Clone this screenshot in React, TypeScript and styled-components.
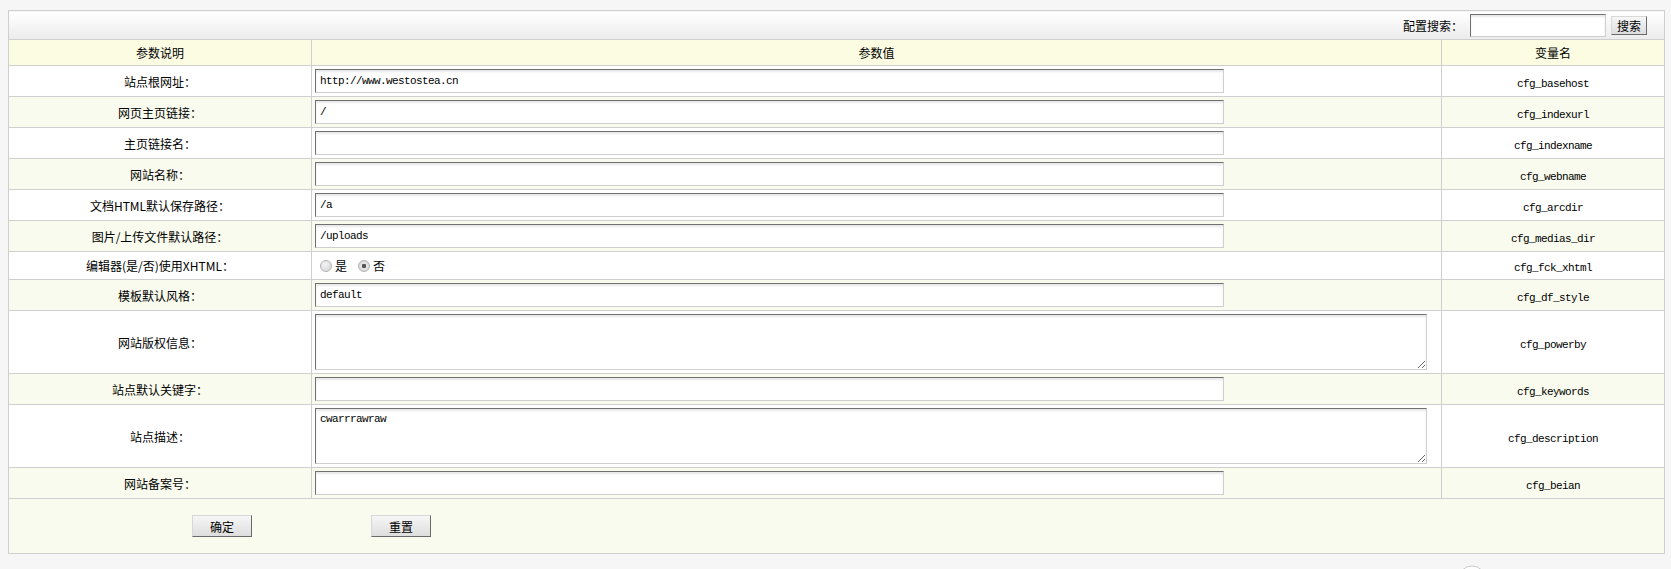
import styled, { createGlobalStyle } from "styled-components";

const GlobalStyle = createGlobalStyle`
  body {
    margin: 10px 6px 8px 8px;
    background: #f6f6f6;
    font-family: "Noto Sans CJK SC", sans-serif;
    font-size: 12px;
    color: #000;
  }
`;

const ConfigTable = styled.table`
  width: 100%;
  border-collapse: collapse;
  table-layout: fixed;
  border: 1px solid #cfcfcf;
  background: #fff;
`;

const Cell = styled.td<{ $align?: string }>`
  border: 1px solid #cfcfcf;
  padding: 0 3px;
  text-align: ${(p) => p.$align || "center"};
  vertical-align: middle;
`;

const SearchCell = styled.td`
  height: 28px;
  padding: 0;
  border: 1px solid #cfcfcf;
  background: linear-gradient(#ffffff, #ececec);
`;

const SearchBar = styled.div`
  display: flex;
  justify-content: flex-end;
  align-items: center;
  padding-right: 17px;
  height: 28px;
`;

const SearchLabel = styled.span`
  margin-right: 7px;
`;

const HeadRow = styled.tr`
  background: #fbfce2;

  & > td {
    height: 25px;
  }
`;

const DataRow = styled.tr<{ $striped: boolean; $tall?: boolean; $short?: boolean }>`
  background: ${(p) => (p.$striped ? "#f9fbee" : "#ffffff")};

  & > td {
    height: ${(p) => (p.$tall ? "62px" : p.$short ? "27px" : "30px")};
  }
`;

const VarName = styled.span`
  font-family: "Liberation Mono", monospace;
  font-size: 11px;
  letter-spacing: -0.6px;
`;

const TextInput = styled.input`
  box-sizing: border-box;
  width: 909px;
  height: 24px;
  margin: 0;
  padding: 0 4px;
  border: 1px solid #cfcfcf;
  border-top-color: #707070;
  border-left-color: #707070;
  box-shadow: inset 0 2px 2px #e8e8e8;
  font-family: "Liberation Mono", monospace;
  font-size: 11px;
  letter-spacing: -0.6px;
  color: #000;
  display: block;
  outline: none;
`;

const SearchInput = styled(TextInput)`
  width: 136px;
  height: 23px;
  margin-right: 5px;
`;

const TextBox = styled.textarea`
  box-sizing: border-box;
  width: 1112px;
  height: 56px;
  margin: 0;
  padding: 4px;
  border: 1px solid #cfcfcf;
  border-top-color: #707070;
  border-left-color: #707070;
  box-shadow: inset 0 2px 2px #e8e8e8;
  font-family: "Liberation Mono", monospace;
  font-size: 11px;
  letter-spacing: -0.6px;
  display: block;
  outline: none;
`;

const RadioGroup = styled.div`
  display: flex;
  align-items: center;
  gap: 6px;

  & label {
    display: flex;
    align-items: center;
  }
`;

const Radio = styled.input`
  appearance: none;
  box-sizing: border-box;
  width: 12px;
  height: 12px;
  margin: 0 3px 0 5px;
  border: 1px solid #b4b4b4;
  border-radius: 50%;
  background: radial-gradient(circle at 40% 35%, #f4f4f4, #d2d2d2);

  &:checked {
    background: radial-gradient(circle, #555 0 2px, #e6e6e6 2.5px, #cfcfcf);
  }
`;

const CoolButton = styled.button<{ $w: number; $h: number }>`
  width: ${(p) => p.$w}px;
  height: ${(p) => p.$h}px;
  padding: 0;
  border: 1px solid #d8d8d8;
  border-right-color: #6a6a6a;
  border-bottom-color: #6a6a6a;
  background: linear-gradient(#f6f6f6, #dedede);
  font-family: "Noto Sans CJK SC", sans-serif;
  font-size: 12px;
  color: #000;
  cursor: pointer;
`;

const FooterRow = styled.tr`
  background: #f9fbee;

  & > td {
    height: 54px;
  }
`;

const ButtonBar = styled.div`
  display: flex;
  align-items: center;
  gap: 119px;
  padding-left: 180px;
`;

const BelowBar = styled.div`
  display: flex;
  justify-content: flex-end;
  padding-right: 178px;
  margin-top: 11px;
`;

type Row = {
  label: string;
  name: string;
  value?: string;
  type?: "text" | "radio" | "textarea";
};

const rows: Row[] = [
  { label: "站点根网址：", value: "http://www.westostea.cn", name: "cfg_basehost" },
  { label: "网页主页链接：", value: "/", name: "cfg_indexurl" },
  { label: "主页链接名：", value: "", name: "cfg_indexname" },
  { label: "网站名称：", value: "", name: "cfg_webname" },
  { label: "文档HTML默认保存路径：", value: "/a", name: "cfg_arcdir" },
  { label: "图片/上传文件默认路径：", value: "/uploads", name: "cfg_medias_dir" },
  { label: "编辑器(是/否)使用XHTML：", type: "radio", name: "cfg_fck_xhtml" },
  { label: "模板默认风格：", value: "default", name: "cfg_df_style" },
  { label: "网站版权信息：", type: "textarea", value: "", name: "cfg_powerby" },
  { label: "站点默认关键字：", value: "", name: "cfg_keywords" },
  { label: "站点描述：", type: "textarea", value: "cwarrrawraw", name: "cfg_description" },
  { label: "网站备案号：", value: "", name: "cfg_beian" },
];

function Field({ row }: { row: Row }) {
  if (row.type === "radio") {
    return (
      <RadioGroup>
        <label>
          <Radio type="radio" name={row.name} value="Y" />是
        </label>
        <label>
          <Radio type="radio" name={row.name} value="N" defaultChecked />否
        </label>
      </RadioGroup>
    );
  }
  if (row.type === "textarea") {
    return <TextBox name={row.name} defaultValue={row.value} />;
  }
  return <TextInput type="text" name={row.name} defaultValue={row.value} />;
}

export default function App() {
  return (
    <>
      <GlobalStyle />
      <form onSubmit={(e) => e.preventDefault()}>
        <ConfigTable>
          <colgroup>
            <col style={{ width: 303 }} />
            <col />
            <col style={{ width: 223 }} />
          </colgroup>
          <tbody>
            <tr>
              <SearchCell colSpan={3}>
                <SearchBar>
                  <SearchLabel>配置搜索：</SearchLabel>
                  <SearchInput type="text" name="keywds" />
                  <CoolButton type="button" $w={36} $h={19}>
                    搜索
                  </CoolButton>
                </SearchBar>
              </SearchCell>
            </tr>
            <HeadRow>
              <Cell>参数说明</Cell>
              <Cell>参数值</Cell>
              <Cell>变量名</Cell>
            </HeadRow>
            {rows.map((row, i) => (
              <DataRow
                key={row.name}
                $striped={i % 2 === 1}
                $tall={row.type === "textarea"}
                $short={row.type === "radio"}
              >
                <Cell>{row.label}</Cell>
                <Cell $align="left">
                  <Field row={row} />
                </Cell>
                <Cell>
                  <VarName>{row.name}</VarName>
                </Cell>
              </DataRow>
            ))}
            <FooterRow>
              <Cell colSpan={3} $align="left">
                <ButtonBar>
                  <CoolButton type="submit" $w={60} $h={22}>
                    确定
                  </CoolButton>
                  <CoolButton type="reset" $w={60} $h={22}>
                    重置
                  </CoolButton>
                </ButtonBar>
              </Cell>
            </FooterRow>
          </tbody>
        </ConfigTable>
      </form>
      <BelowBar>
        <svg width="30" height="30" viewBox="0 0 30 30">
          <circle cx="15" cy="15" r="14" fill="#fff" stroke="#c8c8c8" strokeWidth="1" />
          <circle cx="15" cy="15" r="10" fill="#8a2a1a" />
        </svg>
      </BelowBar>
    </>
  );
}
